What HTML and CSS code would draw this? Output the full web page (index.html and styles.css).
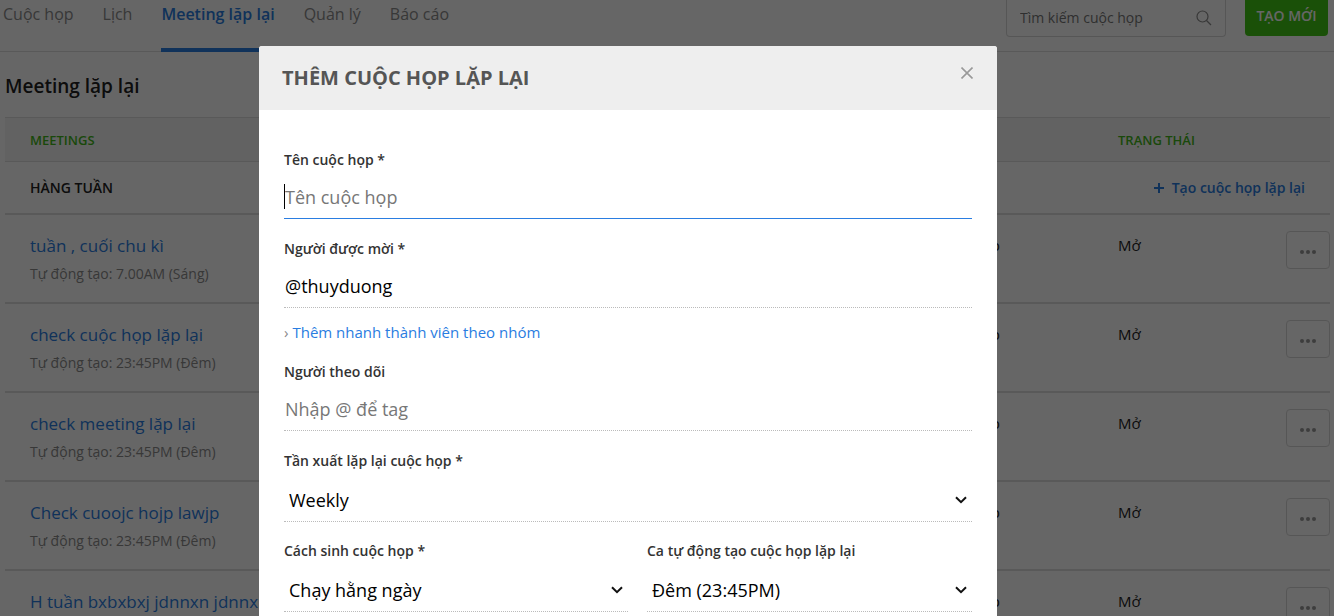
FILE: index.html
```html
<!doctype html>
<html lang="vi">
    <head>
        <meta charset="utf-8">
        <meta name="viewport" content="width=device-width, initial-scale=1">
        <title>Meeting lặp lại</title>
        <link rel="stylesheet" href="styles.css">
    </head>

    <body>
        <header class="topbar">
            <nav class="tabs">
                <a class="tab" href="#">Cuộc họp</a>
                <a class="tab" href="#">Lịch</a>
                <a class="tab active" href="#">Meeting lặp lại</a>
                <a class="tab" href="#">Quản lý</a>
                <a class="tab" href="#">Báo cáo</a>
            </nav>
            <div class="search">
                <input type="text" placeholder="Tìm kiếm cuộc họp" aria-label="Tìm kiếm cuộc họp">
                <svg width="16" height="16" viewBox="0 0 16 16" fill="none" stroke="#8c8c8c" stroke-width="1.2">
                    <circle cx="6.5" cy="6.5" r="5.5"/>
                    <path d="M10.5 10.5L15 15"/>
                </svg>
            </div>
            <button class="create" type="button">TẠO MỚI</button>
        </header>

        <main class="content">
            <h1 class="title">Meeting lặp lại</h1>
            <table class="meetings">
                <colgroup>
                    <col>
                    <col class="col-kind">
                    <col class="col-status">
                    <col class="col-action">
                </colgroup>
                <thead>
                    <tr>
                        <th>MEETINGS</th>
                        <th></th>
                        <th class="status" colspan="2">TRẠNG THÁI</th>
                    </tr>
                </thead>
                <tbody>
                    <tr class="group">
                        <td>HÀNG TUẦN</td>
                        <td class="add" colspan="3"><a href="#"><svg width="10" height="10" viewBox="0 0 10 10" stroke="currentColor" stroke-width="2"><path d="M5 0V10M0 5H10"/></svg>Tạo cuộc họp lặp lại</a></td>
                    </tr>
                    <tr class="item">
                        <td><a class="name" href="#">tuần , cuối chu kì</a><div class="sub">Tự động tạo: 7.00AM (Sáng)</div></td>
                        <td class="kind">Cuộc họp</td>
                        <td class="status">Mở</td>
                        <td class="action"><button class="more" type="button" aria-label="Tùy chọn"><i></i><i></i><i></i></button></td>
                    </tr>
                    <tr class="item">
                        <td><a class="name" href="#">check cuộc họp lặp lại</a><div class="sub">Tự động tạo: 23:45PM (Đêm)</div></td>
                        <td class="kind">Cuộc họp</td>
                        <td class="status">Mở</td>
                        <td class="action"><button class="more" type="button" aria-label="Tùy chọn"><i></i><i></i><i></i></button></td>
                    </tr>
                    <tr class="item">
                        <td><a class="name" href="#">check meeting lặp lại</a><div class="sub">Tự động tạo: 23:45PM (Đêm)</div></td>
                        <td class="kind">Cuộc họp</td>
                        <td class="status">Mở</td>
                        <td class="action"><button class="more" type="button" aria-label="Tùy chọn"><i></i><i></i><i></i></button></td>
                    </tr>
                    <tr class="item">
                        <td><a class="name" href="#">Check cuoojc hojp lawjp</a><div class="sub">Tự động tạo: 23:45PM (Đêm)</div></td>
                        <td class="kind">Cuộc họp</td>
                        <td class="status">Mở</td>
                        <td class="action"><button class="more" type="button" aria-label="Tùy chọn"><i></i><i></i><i></i></button></td>
                    </tr>
                    <tr class="item">
                        <td><a class="name" href="#">H tuần bxbxbxj jdnnxn jdnnxn</a></td>
                        <td class="kind">Cuộc họp</td>
                        <td class="status">Mở</td>
                        <td class="action"><button class="more" type="button" aria-label="Tùy chọn"><i></i><i></i><i></i></button></td>
                    </tr>
                </tbody>
            </table>
        </main>

        <div class="overlay">
            <form class="modal" role="dialog" aria-labelledby="modal-title">
                <div class="modal-head">
                    <h2 id="modal-title">THÊM CUỘC HỌP LẶP LẠI</h2>
                    <button class="close" type="button" aria-label="Đóng">
                        <svg width="12" height="12" viewBox="0 0 12 12" stroke="#999" stroke-width="1.6"><path d="M0.5 0.5L11.5 11.5M11.5 0.5L0.5 11.5"/></svg>
                    </button>
                </div>
                <div class="modal-body">
                    <div class="field focused">
                        <label for="name">Tên cuộc họp *</label>
                        <input id="name" type="text" placeholder="Tên cuộc họp">
                        <span class="caret"></span>
                    </div>
                    <div class="field">
                        <label for="invited">Người được mời *</label>
                        <input id="invited" type="text" value="@thuyduong">
                    </div>
                    <div class="quick"><span>›</span> <a href="#">Thêm nhanh thành viên theo nhóm</a></div>
                    <div class="field">
                        <label for="followers">Người theo dõi</label>
                        <input id="followers" type="text" placeholder="Nhập @ để tag">
                    </div>
                    <div class="field">
                        <label for="freq">Tần xuất lặp lại cuộc họp *</label>
                        <select id="freq"><option>Weekly</option></select>
                        <svg class="arrow" width="12" height="8" viewBox="0 0 12 8" fill="none" stroke="#111" stroke-width="2"><path d="M1 1.2L6 6.2L11 1.2"/></svg>
                    </div>
                    <div class="row">
                        <div class="field">
                            <label for="mode">Cách sinh cuộc họp *</label>
                            <select id="mode"><option>Chạy hằng ngày</option></select>
                            <svg class="arrow" width="12" height="8" viewBox="0 0 12 8" fill="none" stroke="#111" stroke-width="2"><path d="M1 1.2L6 6.2L11 1.2"/></svg>
                        </div>
                        <div class="field">
                            <label for="shift">Ca tự động tạo cuộc họp lặp lại</label>
                            <select id="shift"><option>Đêm (23:45PM)</option></select>
                            <svg class="arrow" width="12" height="8" viewBox="0 0 12 8" fill="none" stroke="#111" stroke-width="2"><path d="M1 1.2L6 6.2L11 1.2"/></svg>
                        </div>
                    </div>
                </div>
            </form>
        </div>
    </body>
</html>
```
FILE: styles.css
```css
*{
    box-sizing: border-box;
}
html{
    height: 100%;
    overflow: hidden;
}
body{
    margin: 0;
    height: 100%;
    overflow: hidden;
    background: white;
    color: #222;
    font-family: "Segoe UI", "Open Sans", "Noto Sans", sans-serif;
    font-size: 15px;
    line-height: 20px;
}
a{
    color: #2a7de1;
    text-decoration: none;
}
input, select, button{
    font-family: inherit;
    font-size: inherit;
    line-height: inherit;
}

/* top bar */
.topbar{
    display: flex;
    align-items: flex-start;
    height: 52px;
    padding: 0 6px 0 3px;
    border-bottom: 1px solid #dfdfdf;
}
.tabs{
    display: flex;
    flex: 1;
    gap: 29px;
    height: 52px;
}
.tab{
    padding-top: 4px;
    color: #8c8c8c;
    font-size: 16px;
}
.tab.active{
    border-bottom: 4px solid #2a7de1;
    color: #2a7de1;
    font-weight: 600;
}
.search{
    display: flex;
    align-items: center;
    width: 220px;
    height: 37px;
    margin-right: 19px;
    padding: 0 13px;
    border: 1px solid #d8d8d8;
    border-top: 0;
    border-radius: 0 0 4px 4px;
}
.search input{
    flex: 1;
    min-width: 0;
    padding: 0;
    border: 0;
    background: none;
    font-size: 14px;
}
.search input::placeholder{
    color: #777;
}
.create{
    width: 83px;
    height: 36px;
    padding: 0 0 4px;
    border: 0;
    border-radius: 0 0 4px 4px;
    background: #43c816;
    color: white;
    font-size: 14px;
    font-weight: 600;
}

/* list */
.content{
    padding: 20px 4px 0 5px;
}
.title{
    margin: 0 0 17px;
    font-size: 19px;
    line-height: 28px;
    font-weight: 600;
}
.meetings{
    width: 100%;
    table-layout: fixed;
    border-collapse: separate;
    border-spacing: 0;
}
.meetings th, .meetings td{
    padding: 0 0 0 25px;
    text-align: left;
    vertical-align: top;
    white-space: nowrap;
}
.meetings th{
    height: 45px;
    border-top: 1px solid #dfdfdf;
    border-bottom: 1px solid #dfdfdf;
    background: #f5f5f5;
    color: #43b61a;
    font-size: 13px;
    font-weight: 600;
    vertical-align: middle;
}
.col-kind{
    width: 200px;
}
.col-status{
    width: 286px;
}
.col-action{
    width: 44px;
}
.meetings .group td{
    height: 53px;
    border-bottom: 2px solid #dfdfdf;
    font-size: 14px;
    font-weight: 600;
    vertical-align: middle;
}
.meetings .add{
    padding-right: 25px;
    text-align: right;
}
.add svg{
    margin-right: 8px;
}
.meetings .item td{
    height: 89px;
    padding-top: 20px;
    border-bottom: 2px solid #dfdfdf;
}
.meetings .name{
    font-size: 17px;
    line-height: 22px;
}
.sub{
    margin-top: 7px;
    color: #8c8c8c;
    font-size: 14px;
}
.meetings .kind{
    padding-left: 0;
    text-align: right;
}
.meetings .status{
    padding-left: 118px;
}
.meetings .item .action{
    padding: 16px 0 0;
}
.more{
    display: flex;
    align-items: center;
    justify-content: center;
    gap: 2px;
    width: 44px;
    height: 38px;
    padding: 4px 0 0;
    border: 1px solid #d8d8d8;
    border-radius: 4px;
    background: none;
}
.more i{
    width: 4px;
    height: 4px;
    border-radius: 50%;
    background: #999;
}

/* popup */
.overlay{
    position: fixed;
    inset: 0;
    display: flex;
    align-items: flex-start;
    padding: 46px 337px 0 259px;
    background: rgba(0, 0, 0, 0.6);
}
.modal{
    flex: 1;
    min-width: 0;
    border-radius: 3px;
    background: white;
    overflow: hidden;
}
.modal-head{
    display: flex;
    align-items: center;
    justify-content: space-between;
    height: 64px;
    padding: 0 24px 0 23px;
    background: #eee;
}
.modal-head h2{
    margin: 0;
    color: #555;
    font-size: 20px;
    line-height: 24px;
    font-weight: 700;
}
.close{
    display: flex;
    padding: 0;
    margin-bottom: 10px;
    border: 0;
    background: none;
}
.modal-body{
    padding: 40px 25px 5px;
}
.field{
    position: relative;
    margin-bottom: 20px;
}
.field label{
    display: block;
    color: #333;
    font-size: 14px;
    font-weight: 600;
}
.field input, .field select{
    display: block;
    width: 100%;
    border: 0;
    border-bottom: 1px dotted #bbb;
    border-radius: 0;
    background: white;
    color: black;
    font-size: 18px;
    line-height: 28px;
    outline: 0;
}
.field input{
    height: 49px;
    padding: 6px 0 0 1px;
}
.field select{
    appearance: none;
    height: 51px;
    padding: 7px 24px 0 5px;
}
.field input::placeholder{
    color: #777;
}
.field.focused input{
    border-bottom: 1px solid #2a7de1;
}
.caret{
    position: absolute;
    left: 0;
    bottom: 10px;
    width: 1px;
    height: 25px;
    background: black;
}
.arrow{
    position: absolute;
    right: 5px;
    bottom: 18px;
    pointer-events: none;
}
.quick{
    margin: -7px 0 19px;
    line-height: 22px;
}
.quick span{
    color: #888;
}
.row{
    display: grid;
    grid-template-columns: 1fr 1fr;
    margin-top: -1px;
}
.row .field + .field{
    margin-left: 19px;
}
```
